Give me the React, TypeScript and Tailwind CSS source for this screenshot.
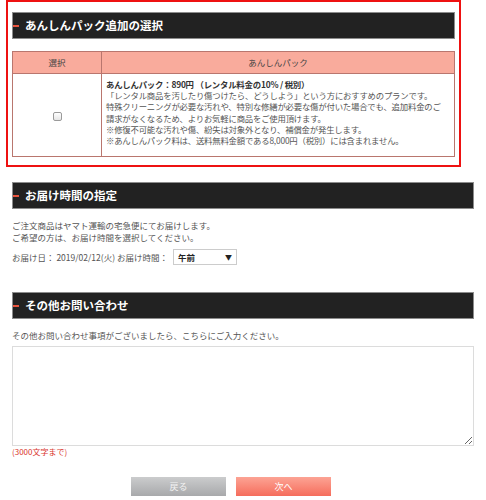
import React from "react";

const font = { fontFamily: '"Noto Sans CJK JP", "Noto Sans", sans-serif' };

function Bar({ title }: { title: string }) {
  return (
    <div className="relative flex h-[27px] items-center border border-[#8c8c8c] bg-[#222222] pl-[12px]">
      <span className="absolute left-0 top-[12px] h-[2px] w-[6px] bg-[#e8553f]" />
      <span className="text-[11.5px] font-bold leading-none text-white">{title}</span>
    </div>
  );
}

export default function App() {
  return (
    <div className="w-[486px] bg-white pb-[6px] text-[#555]" style={font}>
      {/* Section 1 */}
      <div className="ml-[6px] w-[455px] border-2 border-[#ee1111] px-[4px] pb-[8px] pt-[10px]">
        <Bar title="あんしんパック追加の選択" />
        <table className="mt-[12px] w-full table-fixed border-collapse text-[8.5px]">
          <colgroup>
            <col className="w-[89px]" />
            <col />
          </colgroup>
          <thead>
            <tr className="h-[22px] bg-[#f9ab9c] text-[#444]">
              <th className="border border-[#b9766e] font-normal">選択</th>
              <th className="border border-[#b9766e] font-normal">あんしんパック</th>
            </tr>
          </thead>
          <tbody>
            <tr className="h-[83px]">
              <td className="border border-[#b9766e] text-center align-middle">
                <span className="inline-block h-[9px] w-[9px] rounded-[2px] border border-[#9a9a9a] bg-gradient-to-b from-white to-[#e6e6e6] align-middle" />
              </td>
              <td className="whitespace-nowrap border border-[#b9766e] px-[4px] py-[5px] align-top text-[8.4px] leading-[11.2px] tracking-[-0.2px]">
                <div className="font-bold text-[#333]">あんしんパック：890円 （レンタル料金の10% / 税別）</div>
                <div>「レンタル商品を汚したり傷つけたら、どうしよう」という方におすすめのプランです。</div>
                <div>特殊クリーニングが必要な汚れや、特別な修繕が必要な傷が付いた場合でも、追加料金のご</div>
                <div>請求がなくなるため、よりお気軽に商品をご使用頂けます。</div>
                <div>※修復不可能な汚れや傷、紛失は対象外となり、補償金が発生します。</div>
                <div>※あんしんパック料は、送料無料金額である8,000円（税別）には含まれません。</div>
              </td>
            </tr>
          </tbody>
        </table>
      </div>

      {/* Section 2 */}
      <div className="mx-[12px] mt-[15px]">
        <Bar title="お届け時間の指定" />
        <div className="mt-[11px] text-[8.5px] leading-[11.5px]">
          <div>ご注文商品はヤマト運輸の宅急便にてお届けします。</div>
          <div>ご希望の方は、お届け時間を選択してください。</div>
        </div>
        <div className="mt-[6px] flex items-center text-[8.5px]">
          <span>お届け日：&nbsp;2019/02/12(火) お届け時間：</span>
          <div className="ml-[5px] flex h-[16px] w-[64px] items-center justify-between border border-[#cccccc] bg-white px-[4px] text-[8.5px] font-bold text-[#222]">
            <span>午前</span>
            <span className="text-[7px]">▼</span>
          </div>
        </div>
      </div>

      {/* Section 3 */}
      <div className="mx-[12px] mt-[27px]">
        <Bar title="その他お問い合わせ" />
        <div className="mt-[11px] text-[8.5px] leading-[11px]">
          その他お問い合わせ事項がございましたら、こちらにご入力ください。
        </div>
        <textarea className="mt-[5px] block h-[100px] w-full resize-y border border-[#dcdcdc] bg-white outline-none" />
        <div className="mt-[1px] text-[8px] leading-[10px] text-[#d9332b]">(3000文字まで)</div>
        <div className="mt-[20px] flex gap-[10px] pl-[119px]">
          <div className="flex h-[19px] w-[95px] items-center justify-center bg-gradient-to-b from-[#cbcccd] to-[#a8a9ab] text-[9px] text-[#f3f3f3]">
            戻る
          </div>
          <div className="flex h-[19px] w-[95px] items-center justify-center bg-gradient-to-b from-[#fca394] to-[#f56c5c] text-[9px] text-white">
            次へ
          </div>
        </div>
      </div>
    </div>
  );
}
